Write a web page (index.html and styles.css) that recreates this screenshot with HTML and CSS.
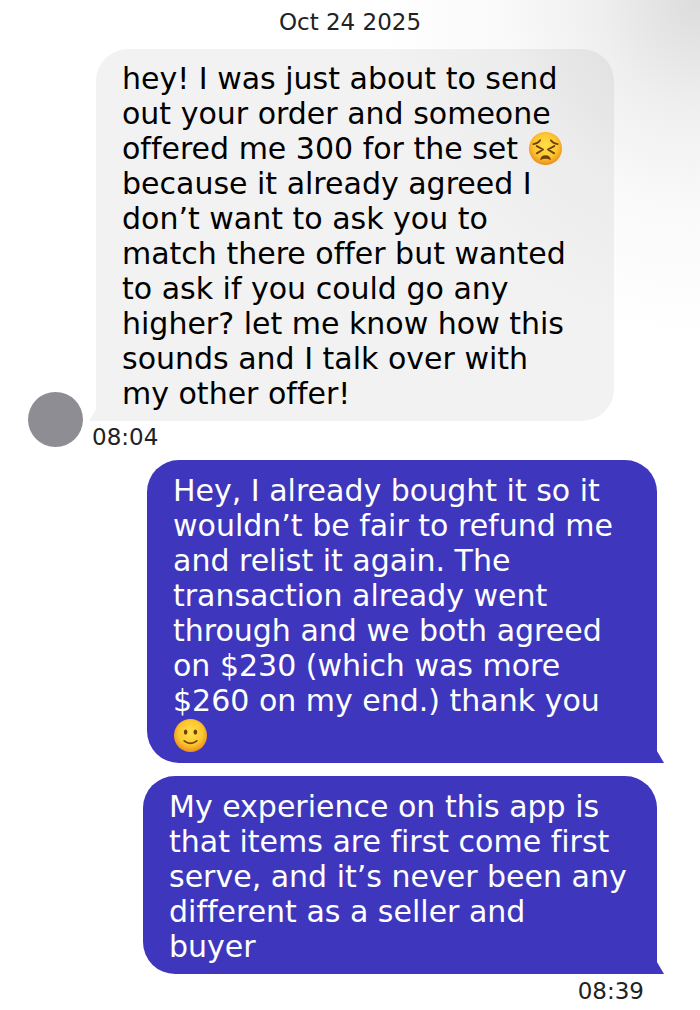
FILE: index.html
```html
<!DOCTYPE html>
<html lang="en">
<head>
    <meta charset="utf-8">
    <meta name="viewport" content="width=device-width, initial-scale=1">
    <title>Messages</title>
    <link rel="stylesheet" href="styles.css">
</head>
<body>
    <main class="chat">
        <time class="date" datetime="2025-10-24">Oct 24 2025</time>

        <div class="received">
            <div class="avatar"></div>
            <div class="message">
                <p class="bubble bubble-received">hey! I was just about to send<br>
                out your order and someone<br>
                offered me 300 for the set
                <svg class="emoji" viewBox="0 0 36 36" role="img" aria-label="persevering face">
                    <defs>
                        <radialGradient id="face" cx="50%" cy="42%" r="56%">
                            <stop offset="0" stop-color="#ffe04a"/>
                            <stop offset="0.65" stop-color="#fdc62e"/>
                            <stop offset="1" stop-color="#ea9320"/>
                        </radialGradient>
                    </defs>
                    <circle cx="18" cy="18" r="17" fill="url(#face)"/>
                    <g fill="none" stroke="#70400c" stroke-width="1.9" stroke-linecap="round" stroke-linejoin="round">
                        <path d="M5.5 13.5Q10 13 12.5 9.5M30.5 13.500Q26 13 23.500 9.5"/>
                        <path d="M9 15.500L15.500 19L9 23M27 15.500L20.500 19L27 23"/>
                    </g>
                    <path d="M12.500 30Q13 25 18 25T23.500 30Q18 27 12.500 30Z" fill="#70400c"/>
                </svg><br>
                because it already agreed I<br>
                don’t want to ask you to<br>
                match there offer but wanted<br>
                to ask if you could go any<br>
                higher? let me know how this<br>
                sounds and I talk over with<br>
                my other offer!</p>
                <time class="time" datetime="08:04">08:04</time>
            </div>
        </div>

        <div class="sent">
            <p class="bubble bubble-sent">Hey, I already bought it so it<br>
            wouldn’t be fair to refund me<br>
            and relist it again. The<br>
            transaction already went<br>
            through and we both agreed<br>
            on $230 (which was more<br>
            $260 on my end.) thank you<br>
            <svg class="emoji" viewBox="0 0 36 36" role="img" aria-label="slightly smiling face">
                <circle cx="18" cy="18" r="17" fill="url(#face)"/>
                <ellipse cx="13" cy="14.5" rx="1.9" ry="2.7" fill="#70400c"/>
                <ellipse cx="23" cy="14.5" rx="1.9" ry="2.7" fill="#70400c"/>
                <path d="M11.5 23.5Q18 28.5 24.5 23.5" fill="none" stroke="#70400c" stroke-width="1.7" stroke-linecap="round"/>
            </svg></p>
            <p class="bubble bubble-sent bubble-wide">My experience on this app is<br>
            that items are first come first<br>
            serve, and it’s never been any<br>
            different as a seller and<br>
            buyer</p>
            <time class="time" datetime="08:39">08:39</time>
        </div>
    </main>
</body>
</html>
```

FILE: styles.css
```css
* {
    box-sizing: border-box;
}

body {
    margin: 0;
    min-height: 100vh;
    background: radial-gradient(ellipse 320px 340px at 100% 0, #dcdcdc, #efefef 32%, #f9f9f9 60%, #fff) no-repeat #fff;
    color: #000;
    font-family: "DejaVu Sans", sans-serif;
    font-size: 30px;
    font-variant-ligatures: none;
    line-height: 35px;
}

.chat {
    padding: 8px 0;
}

.date,
.time {
    display: block;
    color: #222;
    font-size: 23px;
    line-height: 28px;
}

.date {
    text-align: center;
}

.received {
    display: flex;
    align-items: flex-end;
    gap: 13px;
    padding: 0 86px 0 28px;
}

.avatar {
    flex: none;
    width: 55px;
    height: 55px;
    margin-bottom: 4px;
    border-radius: 50%;
    background: #8e8d93;
}

.message {
    flex: 1;
    margin-top: 13px;
}

.message .time {
    margin: 2px 0 0 -4px;
}

.bubble {
    position: relative;
    margin: 0;
    padding: 12px 0 10px 26px;
    border-radius: 32px;
    white-space: nowrap;
}

.bubble-received {
    border-bottom-left-radius: 0;
    background: rgba(0, 0, 0, 0.05);
}

.bubble-sent {
    padding-top: 13px;
    border-bottom-right-radius: 0;
    background: #3e37bd;
    color: #fff;
}

/* little tails on the bottom corners */
.bubble::after {
    content: "";
    position: absolute;
    bottom: 0;
    width: 7px;
    height: 12px;
    background: inherit;
}

.bubble-received::after {
    right: 100%;
    clip-path: polygon(100% 0, 100% 100%, 0 100%);
}

.bubble-sent::after {
    left: 100%;
    clip-path: polygon(0 0, 100% 100%, 0 100%);
}

.sent {
    display: flex;
    flex-direction: column;
    gap: 13px;
    padding: 9px 43px 0 147px;
}

.bubble-wide {
    margin-left: -4px;
}

.sent .time {
    align-self: flex-end;
    margin: -10px 13px 0 0;
}

.emoji {
    width: 35px;
    height: 35px;
    vertical-align: top;
}
```
